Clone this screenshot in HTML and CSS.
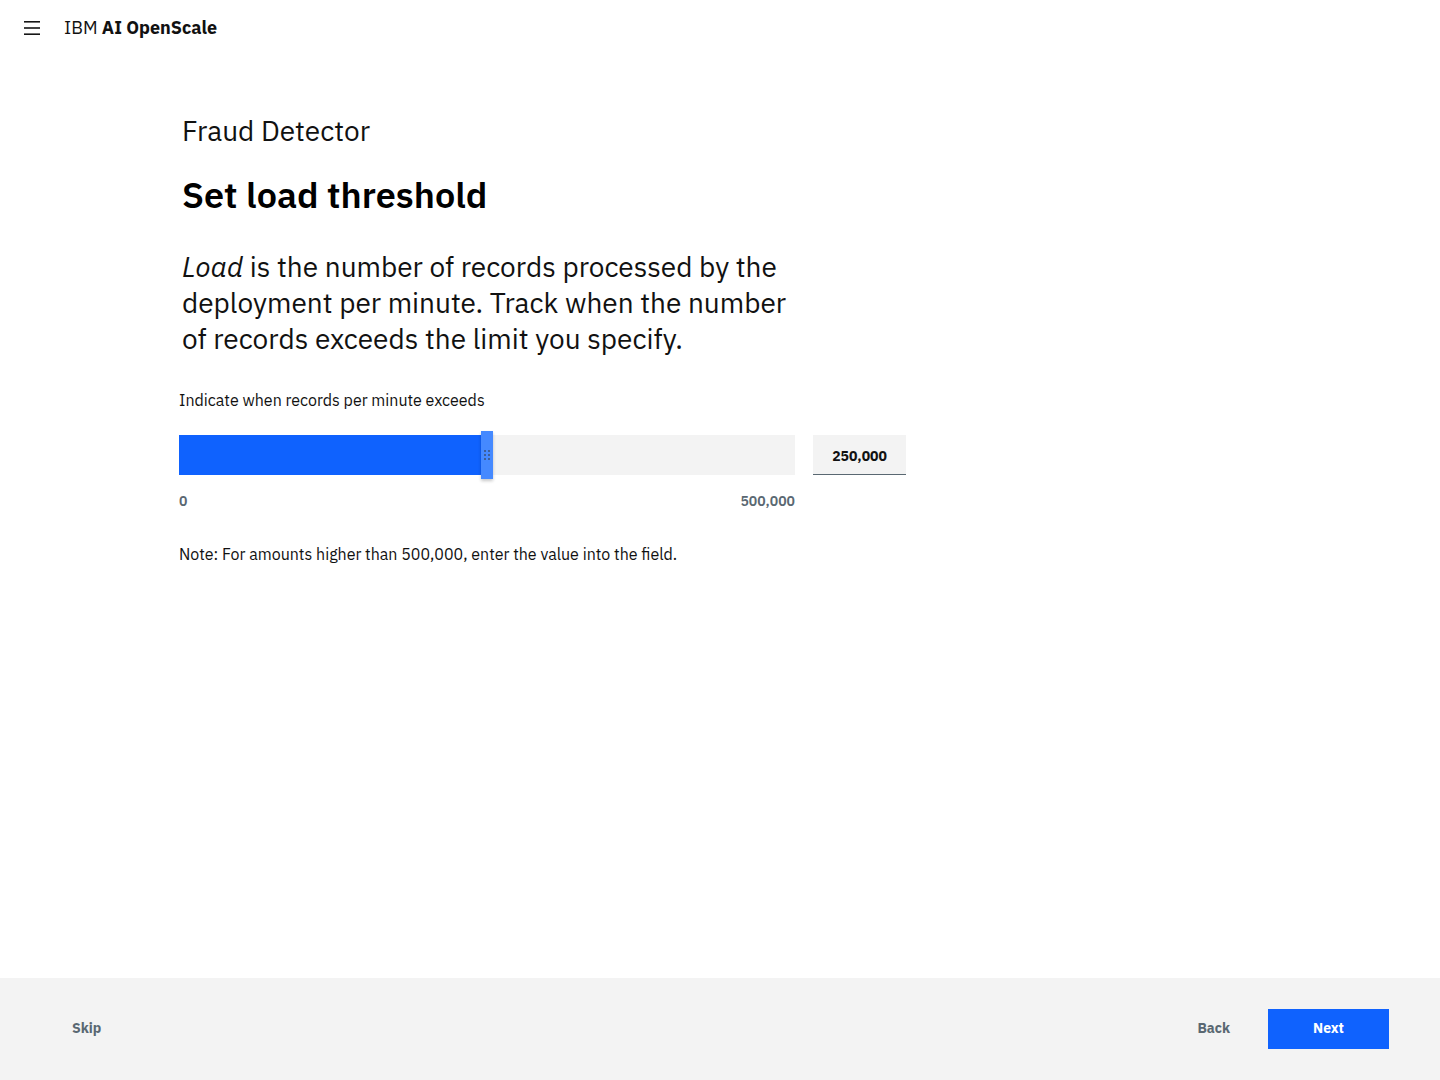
FILE: index.html
```html
<!DOCTYPE html>
<html lang="en">
<head>
<meta charset="utf-8">
<title>IBM AI OpenScale</title>
<link rel="stylesheet" href="styles.css">
</head>
<body>
<div class="page">
  <header class="topbar">
    <button class="menu-btn" aria-label="Menu">
      <svg width="16" height="14" viewBox="0 0 16 14"><rect x="0" y="0" width="16" height="1.6" fill="#161616"/><rect x="0" y="6.2" width="16" height="1.6" fill="#161616"/><rect x="0" y="12.4" width="16" height="1.6" fill="#161616"/></svg>
    </button>
    <div class="brand">IBM <b>AI OpenScale</b></div>
  </header>

  <main class="content">
    <div class="eyebrow">Fraud Detector</div>
    <h1 class="title">Set load threshold</h1>
    <p class="lead"><i>Load</i> is the number of records processed by the deployment per minute. Track when the number of records exceeds the limit you specify.</p>

    <div class="field-label">Indicate when records per minute exceeds</div>
    <div class="slider-row">
      <div class="slider-col">
        <div class="track">
          <div class="fill" style="width: 49.2%"></div>
          <div class="thumb" style="left: 49.2%">
            <svg class="grip" width="6" height="10" viewBox="0 0 6 10">
              <rect x="0" y="0" width="2" height="2"/><rect x="4" y="0" width="2" height="2"/>
              <rect x="0" y="4" width="2" height="2"/><rect x="4" y="4" width="2" height="2"/>
              <rect x="0" y="8" width="2" height="2"/><rect x="4" y="8" width="2" height="2"/>
            </svg>
          </div>
        </div>
        <div class="range">
          <span>0</span>
          <span>500,000</span>
        </div>
      </div>
      <div class="value-box">250,000</div>
    </div>

    <p class="note">Note: For amounts higher than 500,000, enter the value into the field.</p>
  </main>

  <footer class="footer">
    <button class="ghost skip">Skip</button>
    <div class="actions">
      <button class="ghost">Back</button>
      <button class="primary">Next</button>
    </div>
  </footer>
</div>
</body>
</html>
```

FILE: styles.css
```css
* { box-sizing: border-box; }
html, body { margin: 0; padding: 0; }
body {
  font-family: "IBM Plex Sans", Roboto, "Noto Sans", sans-serif;
  color: #000;
  background: #fff;
}
.page {
  height: 1080px;
  display: flex;
  flex-direction: column;
}
.topbar {
  height: 55px;
  display: flex;
  align-items: center;
  padding-left: 24px;
}
.menu-btn {
  width: 16px;
  height: 16px;
  padding: 0;
  margin: 1px 24px 0 0;
  border: 0;
  background: none;
  display: flex;
  align-items: center;
  justify-content: center;
}
.menu-btn svg { display: block; }
.brand {
  font-size: 18px;
  color: #111;
}
.brand b { font-weight: 700; }

.content {
  flex: 1;
  padding: 58px 0 0 179px;
}
.eyebrow {
  font-size: 28px;
  line-height: 36px;
  padding-left: 3px;
  color: #111;
}
.title {
  margin: 26px 0 0;
  font-size: 36px;
  line-height: 40px;
  font-weight: 600;
  padding-left: 3px;
  color: #000;
}
.lead {
  margin: 34px 0 0;
  padding-left: 3px;
  width: 620px;
  font-size: 28px;
  line-height: 36px;
  color: #111;
}
.lead i { font-style: italic; }
.field-label {
  margin-top: 33px;
  font-size: 16px;
  line-height: 20px;
  color: #111;
}
.slider-row {
  margin-top: 25px;
  display: flex;
  gap: 18px;
  align-items: flex-start;
}
.slider-col { width: 616px; }
.track {
  position: relative;
  height: 40px;
  background: #f3f3f3;
}
.fill {
  height: 40px;
  background: #0f62fe;
}
.thumb {
  position: absolute;
  top: -4px;
  width: 12px;
  height: 48px;
  margin-left: -1px;
  background: #4589ff;
  box-shadow: 0 2px 3px rgba(0,0,0,0.22);
  display: flex;
  align-items: center;
  justify-content: center;
}
.grip {
  display: block;
  fill: #3d5f99;
}
.range {
  margin-top: 17px;
  display: flex;
  justify-content: space-between;
  font-size: 14px;
  line-height: 18px;
  font-weight: 600;
  color: #5a6872;
}
.value-box {
  width: 93px;
  height: 40px;
  padding-top: 2px;
  background: #f3f3f3;
  border-bottom: 1px solid #5a6872;
  display: flex;
  align-items: center;
  justify-content: center;
  font-size: 14px;
  font-weight: 700;
  color: #111;
}
.note {
  margin: 34px 0 0;
  font-size: 16px;
  line-height: 20px;
  color: #111;
}

.footer {
  height: 102px;
  background: #f3f3f3;
  display: flex;
  align-items: center;
  justify-content: space-between;
  padding: 0 51px 0 56px;
}
.actions {
  display: flex;
  align-items: center;
  gap: 22px;
}
button {
  font-family: inherit;
  cursor: pointer;
}
.ghost {
  height: 40px;
  padding: 0 16px 2px;
  border: 0;
  background: transparent;
  color: #5a6872;
  font-size: 14px;
  font-weight: 700;
}
.primary {
  width: 121px;
  height: 40px;
  padding: 0 0 2px;
  border: 0;
  background: #0f62fe;
  color: #fff;
  font-size: 14px;
  font-weight: 700;
}
```
